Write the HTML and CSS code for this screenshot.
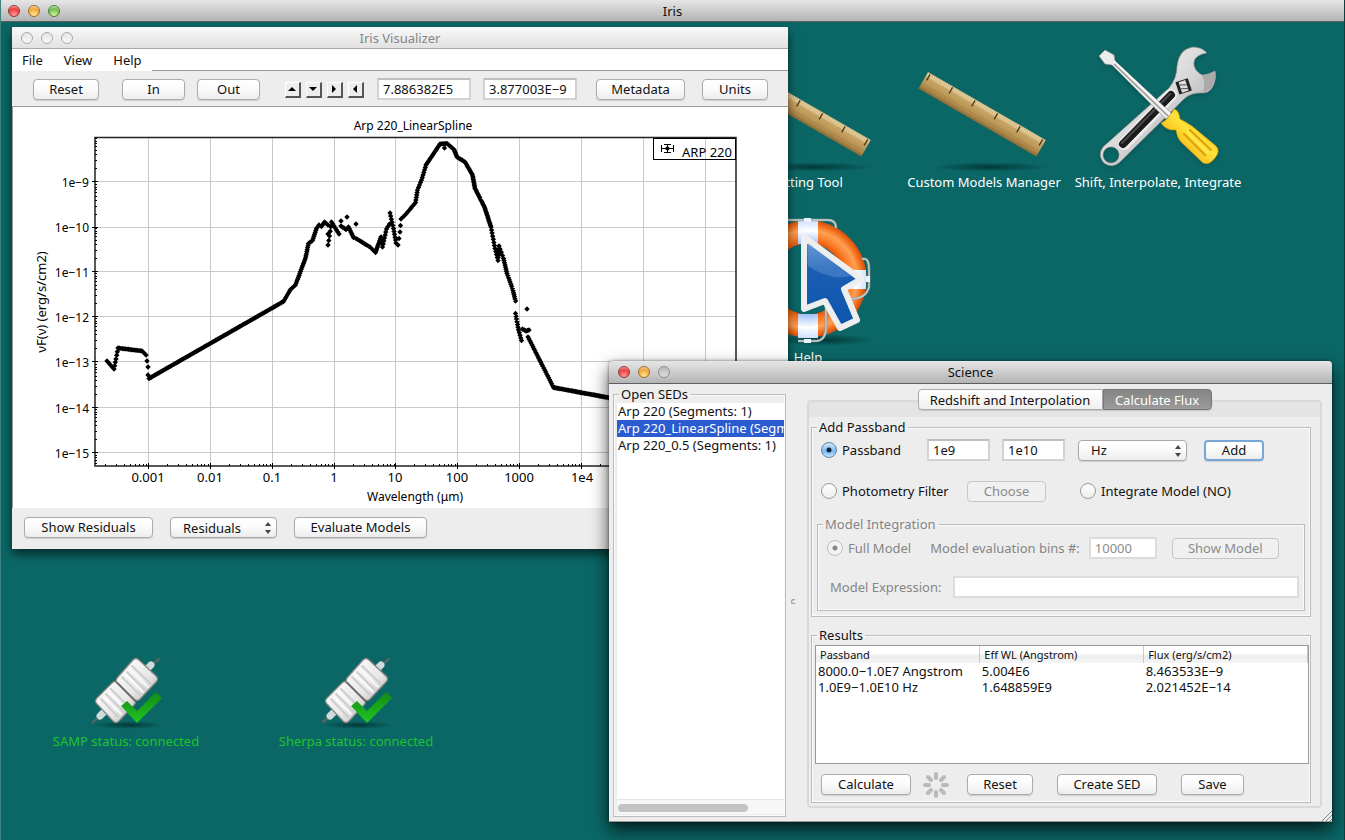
FILE: index.html
```html
<!DOCTYPE html>
<html lang="en">
<head>
<meta charset="utf-8">
<title>Iris</title>
<link rel="stylesheet" href="styles.css">
</head>
<body>
<svg class="defs" width="0" height="0" aria-hidden="true">
  <defs>
    <linearGradient id="wood" x1="0" y1="0" x2="0" y2="1"><stop offset="0" stop-color="#d9bf88"/><stop offset=".35" stop-color="#c5a263"/><stop offset=".7" stop-color="#b89352"/><stop offset="1" stop-color="#8d6b35"/></linearGradient>
    <linearGradient id="steel" x1="0" y1="0" x2="1" y2="1"><stop offset="0" stop-color="#fff"/><stop offset=".5" stop-color="#d8d8d8"/><stop offset="1" stop-color="#8e8e8e"/></linearGradient>
    <linearGradient id="yellow" x1="0" y1="1" x2="1" y2="0"><stop offset="0" stop-color="#c88400"/><stop offset=".3" stop-color="#f7b917"/><stop offset=".55" stop-color="#ffe23a"/><stop offset=".8" stop-color="#f5bd14"/><stop offset="1" stop-color="#e09a05"/></linearGradient>
    <radialGradient id="buoy" gradientUnits="userSpaceOnUse" cx="68" cy="68" r="59"><stop offset=".6" stop-color="#e0560b"/><stop offset=".7" stop-color="#fb7a25"/><stop offset=".83" stop-color="#ffa052"/><stop offset=".93" stop-color="#f06a1a"/><stop offset="1" stop-color="#d04c08"/></radialGradient>
    <radialGradient id="band" gradientUnits="userSpaceOnUse" cx="68" cy="68" r="59"><stop offset=".6" stop-color="#9fc0f5"/><stop offset=".82" stop-color="#fff"/><stop offset="1" stop-color="#cfe0fc"/></radialGradient>
    <linearGradient id="pointer" x1="0" y1="0" x2="0" y2="1"><stop offset="0" stop-color="#5d93d4"/><stop offset=".35" stop-color="#1a5fb4"/><stop offset="1" stop-color="#0c54ab"/></linearGradient>
    <linearGradient id="plug" x1="0" y1="0" x2="1" y2="1"><stop offset="0" stop-color="#fff"/><stop offset=".6" stop-color="#e8e8e8"/><stop offset="1" stop-color="#b4b4b4"/></linearGradient>
    <linearGradient id="tick" x1="0" y1="0" x2="0" y2="1"><stop offset="0" stop-color="#128a14"/><stop offset="1" stop-color="#22c522"/></linearGradient>
    <radialGradient id="shade"><stop offset="0" stop-color="#022f2f" stop-opacity=".85"/><stop offset="1" stop-color="#033" stop-opacity="0"/></radialGradient>
    <symbol id="ruler" viewBox="0 -22 136 128">
      <ellipse cx="74" cy="101" rx="60" ry="5" fill="url(#shade)"/>
      <g transform="translate(12 6) rotate(30)">
        <rect width="136" height="19" fill="url(#wood)"/>
        <path d="M1 3h134" stroke="#e6d4a8" stroke-width="4" stroke-dasharray="1 1"/>
        <path d="M3 1v7M29 1v7M55 1v7M81 1v7M107 1v7M133 1v7" stroke="#4a381b" stroke-width="1.3"/>
        <path d="M0 13h136" stroke="#a27d42" stroke-width=".6"/>
      </g>
    </symbol>
    <symbol id="plug-ok" viewBox="0 0 76 80">
      <ellipse cx="40" cy="74" rx="36" ry="4" fill="url(#shade)"/>
      <path d="M5 71l9-7M62 15l9-7" stroke="#566" stroke-width="2.5" stroke-linecap="round"/>
      <path d="M12 65l4-4M59 18l4-4" stroke="#cfdada" stroke-width="7" stroke-linecap="round"/>
      <g stroke="#8a8482" stroke-width="1.2" stroke-linejoin="round" fill="url(#plug)">
        <path d="M45 9q3-3 6 0l17 16q3 3 0 6L52 48q-3 3-6 0L29 33q-2-3 0-6z"/>
        <path d="M24 32q3-3 6 0l16 16q3 3 0 6L31 70q-3 3-6 0L9 53q-3-3 0-6z"/>
      </g>
      <g stroke="#cdcdcd" stroke-width="2" stroke-linecap="round"><path d="M44 15l19 18M39 21l18 18M34 26l18 18M23 38l18 18M18 43l18 18M13 48l17 18"/></g>
      <g stroke="#fff" stroke-width="1.5" stroke-linecap="round"><path d="M42 18l18 18M37 23l18 18M21 41l18 18M16 46l17 17"/></g>
      <path d="M28 31l20 20" stroke="#67615f" stroke-width="1.5"/>
      <path d="M33 55l6-5 10 10 19-19 6 6-25 25z" fill="url(#tick)"/>
    </symbol>
  </defs>
</svg>

<div class="screen">
  <header class="titlebar main-title">
    <span class="lights"><i class="light red"></i><i class="light amber"></i><i class="light green"></i></span>
    <h1>Iris</h1>
  </header>

  <main class="desktop">
    <a class="shortcut fitting" href="#fitting">
      <svg width="136" height="128"><use href="#ruler"/></svg>
      <span>Fitting Tool</span>
    </a>
    <a class="shortcut models" href="#models">
      <svg width="136" height="128"><use href="#ruler"/></svg>
      <span>Custom Models Manager</span>
    </a>
    <a class="shortcut shift" href="#shift">
      <svg width="128" height="128" viewBox="0 0 128 128" class="cast">
        <path fill-rule="evenodd" d="M75 44Q83 34 83 22Q85 5 99 3Q108 3 113 9Q101 11 100 18Q99 26 108 31Q114 31 121 27Q123 35 118 44Q115 49 109 49Q97 48 90 55L26 118Q18 125 10 119Q3 111 9 103zM17 103a8 8 0 1 0 .1 0z" fill="url(#steel)" stroke="#8b8b8b" stroke-width=".7"/>
        <path d="M108 31Q114 31 121 27Q123 35 118 44L109 49Q112 40 108 31z" fill="#aaa"/>
        <path d="M77 51L30 100" stroke="#eee" stroke-width="12" stroke-linecap="round"/>
        <path d="M77 51L29 100" stroke="#1b1b1b" stroke-width="8" stroke-linecap="round"/>
        <path d="M76 50L28 99" stroke="#4a4a4a" stroke-width="2" stroke-linecap="round"/>
        <g transform="rotate(-18 89 42)"><rect x="83" y="36" width="13" height="13" fill="#222"/><rect x="86" y="37" width="7" height="11" fill="#ddd"/><path d="M86 40l7 2M86 44l7 2" stroke="#555"/></g>
        <path d="M5 12L11 6L20 11L21 17L78 70L72 75L18 21L11 20z" fill="#ececec" stroke="#999" stroke-width=".7"/>
        <path d="M20 20L74 72" stroke="#999" stroke-width="1.5"/><path d="M20 17L75 69" stroke="#fff" stroke-width="1.3"/>
        <path d="M80 65Q85 66 86 75Q92 78 98 82L122 102Q127 107 121 114Q115 122 109 119L87 98Q83 94 82 86Q72 87 67 79Q74 76 80 65z" fill="url(#yellow)" stroke="#c98d05" stroke-width=".6"/>
        <path d="M90 90L111 111M96 86L117 106" stroke="#dc9f0c" stroke-width="2" stroke-linecap="round"/><path d="M93 88L114 109" stroke="#ffe94e" stroke-width="2" stroke-linecap="round"/>
      </svg>
      <span>Shift, Interpolate, Integrate</span>
    </a>
    <a class="shortcut help" href="#help">
      <svg width="136" height="136" viewBox="0 0 136 136">
        <ellipse cx="84" cy="129" rx="52" ry="6" fill="url(#shade)"/>
        <circle cx="68" cy="68" r="47" fill="none" stroke="url(#buoy)" stroke-width="23"/>
        <path d="M58 9H78V33H58zM58 103H78V127H58zM103 59H126V78H103z" fill="url(#band)"/>
        <path d="M38 16Q38 9 48 9H88Q96 9 96 17M122 48Q129 46 129 58V76Q126 88 110 88M86 90V118Q85 130 76 130H58" fill="none" stroke="#8e9898" stroke-width="2.6"/>
        <path d="M38 16Q38 9 48 9H88Q96 9 96 17M122 48Q129 46 129 58V76Q126 88 110 88M86 90V118Q85 130 76 130H58" fill="none" stroke="#c5caca" stroke-width="1.4"/>
        <path d="M64 7h7v4h-7zM64 128h7v4h-7zM126 65h4v6h-4z" fill="#e8f3ff"/>
        <path d="M64 26L121 68L104 78L117 109L100 117L85 90L64 98z" fill="url(#pointer)" stroke="#eee" stroke-width="6" stroke-linejoin="round"/>
        <path d="M68 32L111 65Q90 70 68 55z" fill="#8cb4e3" opacity=".3"/>
      </svg>
      <span>Help</span>
    </a>
    <a class="shortcut status samp" href="#samp">
      <svg width="76" height="80"><use href="#plug-ok"/></svg>
      <span>SAMP status: connected</span>
    </a>
    <a class="shortcut status sherpa" href="#sherpa">
      <svg width="76" height="80"><use href="#plug-ok"/></svg>
      <span>Sherpa status: connected</span>
    </a>

    <section class="window visualizer" aria-label="Iris Visualizer">
      <header class="titlebar inactive">
        <span class="lights"><i class="light"></i><i class="light"></i><i class="light"></i></span>
        <h2>Iris Visualizer</h2>
      </header>
      <nav class="menubar">
        <a href="#file">File</a><a href="#view">View</a><a href="#menu-help">Help</a><span class="rule"></span>
      </nav>
      <div class="toolbar">
        <button class="btn w66">Reset</button>
        <div class="pair zooms"><button class="btn w63">In</button><button class="btn w63">Out</button></div>
        <div class="arrows">
          <button aria-label="Up"><svg width="14" height="14" viewBox="0 0 14 14"><path d="M3 9h8L7 5z"/></svg></button>
          <button aria-label="Down"><svg width="14" height="14" viewBox="0 0 14 14"><path d="M3 5h8L7 9z"/></svg></button>
          <button aria-label="Right"><svg width="14" height="14" viewBox="0 0 14 14"><path d="M5 3v8l4-4z"/></svg></button>
          <button aria-label="Left"><svg width="14" height="14" viewBox="0 0 14 14"><path d="M9 3v8L5 7z"/></svg></button>
        </div>
        <div class="pair fields"><input class="field w94" aria-label="X position" value="7.886382E5"><input class="field w94" aria-label="Y position" value="3.877003E−9"></div>
        <div class="pair tail"><button class="btn w89">Metadata</button><button class="btn w66">Units</button></div>
      </div>
      <svg class="plot" viewBox="12 107 776 401" role="img" aria-label="Arp 220_LinearSpline">
        <path d="M12.5 107V508" stroke="#999"/>
        <g id="grid" stroke="#c9c9c9"></g>
        <path d="M95 466V137.500H736V466z" fill="none" stroke="#222" stroke-width="1.500"/>
        <path id="ticks" stroke="#000"/>
        <path id="points"/>
        <rect x="653.5" y="138.500" width="82" height="21" fill="none" stroke="#000"/>
        <path d="M661.500 145v7M673.500 145v7M662 148.500h11M664 144.500h7M664 152.500h7M667.500 144v9" stroke="#000"/><path d="M667.500 146l3 2.500-3 2.500-3-2.500z"/>
        <text x="682" y="157" class="tick">ARP 220</text>
        <text x="413" y="130" class="mid">Arp 220_LinearSpline</text>
        <g class="end">
          <text x="89" y="187">1e−9</text><text x="89" y="232">1e−10</text><text x="89" y="277">1e−11</text><text x="89" y="322">1e−12</text><text x="89" y="367">1e−13</text><text x="89" y="413">1e−14</text><text x="89" y="458">1e−15</text>
        </g>
        <g class="mid tick">
          <text x="148" y="482">0.001</text><text x="210" y="482">0.01</text><text x="272" y="482">0.1</text><text x="334" y="482">1</text><text x="395" y="482">10</text><text x="457" y="482">100</text><text x="519" y="482">1000</text><text x="582" y="482">1e4</text>
        </g>
        <text x="415" y="501" class="mid">Wavelength (μm)</text>
        <text class="mid tick" transform="translate(46 302) rotate(-90)">νF(ν) (erg/s/cm2)</text>
      </svg>
      <footer class="bottombar">
        <button class="btn w129">Show Residuals</button>
        <span class="drop w107"><select aria-label="Residual kind"><option>Residuals</option></select><svg width="6" height="12" viewBox="0 0 6 12"><path d="M0 4h6L3 0zM0 8h6L3 12z"/></svg></span>
        <button class="btn w133">Evaluate Models</button>
      </footer>
    </section>

    <section class="window science" aria-label="Science">
      <header class="titlebar">
        <span class="lights"><i class="light red"></i><i class="light amber"></i><i class="light grey"></i></span>
        <h2>Science</h2>
      </header>
      <div class="split">
        <fieldset class="group seds">
          <legend>Open SEDs</legend>
          <ul class="list">
            <li>Arp 220 (Segments: 1)</li>
            <li class="selected">Arp 220_LinearSpline (Segments: 1)</li>
            <li>Arp 220_0.5 (Segments: 1)</li>
          </ul>
          <div class="scroll"><span></span></div>
        </fieldset>
        <div class="divider"><i></i></div>
        <div class="tabbed">
          <div class="tabs" role="tablist">
            <button role="tab" class="tab">Redshift and Interpolation</button><button role="tab" class="tab current" aria-selected="true">Calculate Flux</button>
          </div>
          <div class="pane">
            <form onsubmit="return false">
            <fieldset class="group passband">
              <legend>Add Passband</legend>
              <div class="row">
                <label class="choice w98"><input type="radio" name="source" checked>Passband</label>
                <input class="field w63" aria-label="From" value="1e9">
                <input class="field w63" aria-label="To" value="1e10">
                <span class="drop w109"><select aria-label="Units"><option>Hz</option></select><svg width="6" height="12" viewBox="0 0 6 12"><path d="M0 4h6L3 0zM0 8h6L3 12z"/></svg></span>
                <button class="btn default w60">Add</button>
              </div>
              <div class="row filter">
                <label class="choice"><input type="radio" name="source">Photometry Filter</label>
                <button class="btn w79" disabled>Choose</button>
                <label class="choice"><input type="radio" name="source">Integrate Model (NO)</label>
              </div>
              <fieldset class="group model" disabled>
                <legend>Model Integration</legend>
                <div class="row bins">
                  <label class="choice"><input type="radio" name="range" checked>Full Model</label>
                  <label for="bins">Model evaluation bins #:</label>
                  <input class="field w68" id="bins" value="10000">
                  <button class="btn w107">Show Model</button>
                </div>
                <div class="row expression">
                  <label for="expr">Model Expression:</label>
                  <input class="field grow" id="expr">
                </div>
              </fieldset>
            </fieldset>
            <fieldset class="group results">
              <legend>Results</legend>
              <div class="tablebox">
                <table>
                  <thead><tr><th>Passband</th><th>Eff WL (Angstrom)</th><th>Flux (erg/s/cm2)</th></tr></thead>
                  <tbody>
                    <tr><td>8000.0−1.0E7 Angstrom</td><td>5.004E6</td><td>8.463533E−9</td></tr>
                    <tr><td>1.0E9−1.0E10 Hz</td><td>1.648859E9</td><td>2.021452E−14</td></tr>
                  </tbody>
                </table>
              </div>
              <div class="actions">
                <button class="btn w90">Calculate</button>
                <svg class="spinner" width="28" height="28" viewBox="-14 -14 28 28"><path d="M0-7V-11M5-5L8-8M7 0H11M5 5L8 8M0 7V11M-5 5L-8 8M-7 0H-11M-5-5L-8-8"/></svg>
                <button class="btn w66">Reset</button>
                <button class="btn w100">Create SED</button>
                <button class="btn w63">Save</button>
              </div>
            </fieldset>
            </form>
          </div>
        </div>
      </div>
      <svg class="grip" width="10" height="10" viewBox="0 0 10 10"><path d="M0 10L10 0M4 10L10 4M8 10L10 8"/></svg>
    </section>
  </main>
</div>
<script src="plot.js"></script>
</body>
</html>
```
FILE: styles.css
```css
* { box-sizing: border-box; }
body { margin: 0; font: 13px/18px "Lucida Grande", "Noto Sans", "Open Sans", sans-serif; color: #111; }
button, input, select { font: inherit; color: inherit; margin: 0; }
h1, h2 { margin: 0; font-size: 13px; font-weight: 400; }
a { color: inherit; text-decoration: none; }
.defs { position: absolute; }

.screen { display: flex; flex-direction: column; min-height: 100vh; background: #0b6766; overflow: hidden; border-left: 1px solid #3d8080; border-right: 1px solid #0a3f3f; }
.desktop { flex: 1; position: relative; margin: 0 -1px; }

/* title bars */
.titlebar { display: grid; grid-template-columns: 1fr auto 1fr; align-items: center; height: 22px; padding: 0 9px; background: linear-gradient(#e6e6e6, #b4b4b4); border-bottom: 1px solid #5e5e5e; }
.main-title { margin: 0 -1px; padding: 0 8px; }
.inactive { background: linear-gradient(#f8f8f8, #e2e2e2); border-bottom-color: #a8a8a8; color: #858585; }
.lights { display: flex; gap: 8px; }
.light { width: 12px; height: 12px; border-radius: 50%; border: 1px solid #aaa; background: linear-gradient(#e4e4e4, #fafafa); }
.red { border-color: #93393a; background: radial-gradient(circle at 50% 90%, #ff9d95, #e83e3e 60%, #f8b5b2 95%); }
.amber { border-color: #9b6a2c; background: radial-gradient(circle at 50% 90%, #ffe98f, #f0a63a 60%, #fae0b0 95%); }
.green { border-color: #4c7c38; background: radial-gradient(circle at 50% 90%, #d2f6a0, #74bd53 60%, #d4efc4 95%); }
.grey { border-color: #8e8e8e; background: linear-gradient(#b9b9b9, #dedede); }

/* desktop shortcuts */
.shortcut { position: absolute; width: 180px; display: flex; flex-direction: column; align-items: center; color: #fff; line-height: 20px; }
.shortcut span { white-space: nowrap; }
.fitting { left: 719px; top: 22px; }
.models { left: 894px; top: 22px; }
.shift { left: 1068px; top: 22px; }
.help { left: 718px; top: 189px; }
.samp { left: 36px; top: 629px; }
.sherpa { left: 266px; top: 629px; }
.status { color: #1fc32a; }
.cast { filter: drop-shadow(0 2px 2px #0447); }

/* windows */
.window { position: absolute; background: #ededed; }
.window > .titlebar { border-radius: 4px 4px 0 0; }
.visualizer { left: 12px; top: 5px; width: 776px; box-shadow: 0 5px 10px #0009; }
.science { left: 609px; top: 339px; width: 723px; box-shadow: 0 8px 18px #000b, 0 0 3px #0008; border-bottom: 1px solid #999; border-radius: 4px 4px 0 0; }
.science > .titlebar { height: 23px; }

/* controls */
.btn { height: 21px; padding: 0; line-height: 19px; text-align: center; border: 1px solid #ababab; border-radius: 4px; background: linear-gradient(#fff, #fbfbfb 45%, #ececec); box-shadow: 0 1px 1px #0002; white-space: nowrap; flex: none; }
.btn:disabled { color: #8c8c8c; border-color: #c6c6c6; background: #f0f0f0; box-shadow: none; }
.default { border: 2px solid #78a7d8; line-height: 17px; }
.field { height: 22px; padding: 0 4px; border: 2px solid #d2d2d2; border-top-color: #bfbfbf; background: #fff; border-radius: 0; flex: none; }
.field:disabled { color: #8c8c8c; border-color: #dcdcdc; background: #fff; }
.drop { position: relative; display: flex; flex: none; }
.drop select { appearance: none; width: 100%; height: 21px; padding: 0 12px; border: 1px solid #a8a8a8; border-radius: 4px; background: linear-gradient(#fff, #fbfbfb 45%, #ececec); box-shadow: 0 1px 1px #0002; }
.drop svg { position: absolute; right: 6px; top: 5px; fill: #444; pointer-events: none; }
.choice { display: flex; align-items: center; gap: 5px; white-space: nowrap; }
.choice input { appearance: none; width: 16px; height: 16px; border: 1px solid #999; border-radius: 50%; background: linear-gradient(#fff, #eee); }
.choice input:checked { border-color: #6084ad; background: radial-gradient(circle, #0b2240 0 2px, transparent 3px), linear-gradient(#d5e8fa, #79b7f0 60%, #c1e6ff); }
.choice input:disabled { border-color: #bdbdbd; background: radial-gradient(circle, #888 0 2px, transparent 3px), #f3f3f3; }
.w60 { width: 60px; } .w63 { width: 63px; } .w66 { width: 66px; } .w68 { width: 68px; }
.w79 { width: 79px; } .w89 { width: 89px; } .w90 { width: 90px; } .w94 { width: 94px; } .w98 { width: 98px; } .w100 { width: 100px; }
.w107 { width: 107px; } .w109 { width: 109px; } .w129 { width: 129px; } .w133 { width: 133px; }
.grow { flex: 1; min-width: 0; }

/* visualizer */
.menubar { display: flex; height: 22px; line-height: 22px; padding-left: 10px; background: #fff; }
.menubar a { margin-right: 21px; }
.rule { flex: 1; border-bottom: 1px solid #999; margin-left: -11px; }
.toolbar { display: flex; align-items: center; height: 36px; padding: 2px 21px 0; border-bottom: 1px solid #9a9a9a; }
.pair { display: flex; gap: 12px; }
.fields { padding-bottom: 2px; }
.zooms { margin: 0 25px 0 23px; }
.tail { margin-left: 19px; gap: 17px; }
.arrows { display: flex; gap: 5px; margin-right: 13px; }
.arrows button { width: 16px; height: 16px; padding: 0; border: 1px solid #fff; border-right: 2px solid #555; border-bottom: 2px solid #555; background: #ededed; }
.arrows svg { display: block; margin: -1px; }
.plot { display: block; width: 100%; background: #fff; font-size: 12px; }
.plot .tick { font-size: 13px; }
.plot .mid { text-anchor: middle; }
.plot .end { text-anchor: end; }
.bottombar { display: flex; gap: 17px; height: 41px; padding: 9px 12px; }

/* science */
.split { display: flex; padding: 1px 10px 4px 4px; }
.group { min-width: 0; margin: 0; padding: 0; border: 1px solid #bcbcbc; box-shadow: inset 0 0 0 1px #fafafa; }
legend { padding: 0 2px; line-height: 18px; }
.seds { width: 173px; flex: none; display: flex; flex-direction: column; padding: 0 1px 2px 3px; }
.list { flex: 1; margin: 0; padding: 0; list-style: none; background: #fff; line-height: 17px; overflow: hidden; }
.list li { padding-left: 1px; white-space: nowrap; }
.selected { background: #2a5cd0; color: #fff; }
.scroll { height: 15px; padding: 4px 1px; background: #f7f7f7; border-top: 1px solid #e4e4e4; }
.scroll span { display: block; width: 79%; height: 8px; border-radius: 4px; background: #c3c3c3; }
.divider { width: 21px; display: flex; align-items: center; justify-content: center; flex: none; }
.divider i { width: 5px; height: 5px; border: 1px solid #999; border-radius: 50%; border-right-color: transparent; margin-right: 6px; }
.tabbed { flex: 1; min-width: 0; padding: 4px 0 9px; }
.tabs { display: flex; justify-content: center; position: relative; z-index: 1; }
.tab { height: 21px; padding: 0; line-height: 18px; width: 185px; border: 1px solid #aaa; border-radius: 4px 0 0 4px; background: linear-gradient(#fff, #f0f0f0); box-shadow: 0 1px 1px #0002; }
.current { width: 109px; border-color: #777; border-radius: 0 4px 4px 0; background: linear-gradient(#858585, #9a9a9a); color: #fff; }
.pane { margin-top: -10px; padding: 16px 9px 3px 2px; border: 2px solid #d9d9d9; border-radius: 4px; background: linear-gradient(#e4e4e4 15px, #ededed 15px); }
.row { display: flex; align-items: center; height: 22px; }
.passband { padding: 3px 5px 5px 5px; }
.passband > .row { padding-left: 4px; }
.passband > .row > * { margin-right: 12px; }
.passband .drop { margin: 0 17px 0 1px; }
.passband .w98 { margin-right: 8px; }
.passband .filter { margin: 19px 0 13px; }
.passband .filter .choice { min-width: 130px; margin-right: 16px; }
.passband .filter .btn { margin-right: 34px; }
.model { color: #858585; padding: 4px 5px 12px 9px; }
.bins label + label { margin: 0 6px 0 19px; }
.bins .field { margin-left: 3px; }
.bins .btn { margin-left: 15px; }
.expression { margin-top: 17px; padding-left: 3px; }
.expression label { margin-right: 12px; }
.passband > legend { margin-left: 0; }
.model > legend { margin-left: -4px; }
.results > legend, .seds > legend { margin-left: 2px; }
.results { margin-top: 9px; padding: 1px 1px 7px 3px; }
.tablebox { height: 119px; border: 1px solid #999; background: #fff; }
table { width: 100%; table-layout: fixed; border-collapse: collapse; }
th { height: 17px; padding: 0 4px; font-size: 11px; font-weight: 400; line-height: 17px; text-align: left; background: linear-gradient(#fff 40%, #ededed 60%, #f4f4f4); border-right: 1px solid #c8c8c8; }
td { height: 16px; padding: 0 2px; line-height: 16px; white-space: nowrap; }
.actions { display: flex; align-items: center; height: 21px; margin: 10px 0 0 6px; }
.actions .btn:nth-child(n+4) { margin-left: 24px; }
.spinner { margin: 0 17px 0 11px; fill: none; stroke: #b9b9b9; stroke-width: 4; stroke-linecap: round; }
.grip { position: absolute; right: 0; bottom: 0; stroke: #888; }
```
FILE: plot.js
```js
const gridX = [148.5, 210.5, 272.5, 334.5, 395.5, 457.5, 519.5, 581.5, 643.5, 705.5];
const gridY = [181.5, 227.5, 271.5, 316.5, 361.5, 407.5, 452.5];
const decadeX = 61.9, decadeY = 45.2;

let grid = '';
gridX.forEach(x => { grid += `<path d="M${x} 138V466"/>`; });
gridY.forEach(y => { grid += `<path d="M96 ${y}H736"/>`; });
document.getElementById('grid').innerHTML = grid;

let ticks = '';
[gridX[0] - decadeX, ...gridX].forEach(x => {
  if (x > 95) ticks += `M${x} 463v6`;
  for (let k = 2; k < 10; k++) {
    const t = Math.round(x + Math.log10(k) * decadeX) + 0.5;
    if (t > 96 && t < 736) ticks += `M${t} 464v2`;
  }
});
[...gridY, gridY[6] + decadeY].forEach(y => {
  if (y < 466) ticks += `M92 ${y}h6`;
  for (let k = 2; k < 10; k++) {
    const t = Math.round(y - Math.log10(k) * decadeY) + 0.5;
    if (t > 138 && t < 466) ticks += `M95 ${t}h2`;
  }
});
document.getElementById('ticks').setAttribute('d', ticks);

/* Each run is sampled at the given step; runs of one vertex are lone points. */
const runs = [
  [1.5, [107, 361], [114, 369]],
  [4, [114, 369], [116, 359], [118, 348]],
  [1.5, [118, 348], [142, 351], [146, 355]],
  [8, [146, 355], [148, 367], [148, 375]],
  [1.3, [149, 378.5], [283.5, 301.5]],
  [2, [283.5, 301.5], [290.5, 289.5], [295.5, 285], [305.5, 258], [308.5, 243.5], [312.5, 240.5], [316.5, 228.5], [319, 225], [321.5, 226.5], [324.5, 222], [328, 225]],
  [5, [328, 245], [329.5, 236], [331.5, 222]],
  [2.5, [331.5, 222], [339, 234]],
  [9, [328, 234]], [9, [341, 221]], [9, [347, 217]], [9, [356, 224]], [9, [444.5, 148]], [9, [527, 309]],
  [1.8, [341, 226], [346, 229.5], [348.5, 227], [353.5, 237.5], [356, 238.5], [370, 247], [375.5, 252.5], [381, 237]],
  [3, [381, 237], [382.5, 247], [386.5, 229], [389.5, 224]],
  [3, [390, 213], [393.5, 228.5], [396, 243], [398, 245]],
  [6, [398, 245], [400, 232], [401, 219]],
  [1.8, [401, 219], [406.5, 213.5], [415.5, 202.5]],
  [2.5, [415.5, 202.5], [417.5, 190], [421.5, 180], [426, 165]],
  [1.5, [426, 165], [440, 144], [447, 143.5], [454, 149.5], [457, 157], [465, 162], [472.5, 175], [475, 188.5], [484.5, 207], [491, 227]],
  [3, [491, 227], [495, 248.5], [498, 260.5], [499, 246], [503.5, 258.5]],
  [2.2, [503.5, 258.5], [507, 273.5], [512.5, 288.5], [515.5, 301]],
  [3, [515.5, 313.5], [518.5, 330], [521.5, 340.5]],
  [2, [522.5, 329], [526, 331], [529, 330]],
  [2.2, [528, 337], [553.5, 387.5]],
  [1.3, [553.5, 387.5], [643, 404]]
];

let points = '';
const mark = (x, y) => { points += `M${x.toFixed(1)} ${(y - 2.7).toFixed(1)}l2.7 2.7-2.7 2.7-2.7-2.7z`; };
runs.forEach(([step, ...pts]) => {
  mark(...pts[0]);
  for (let i = 1; i < pts.length; i++) {
    const [x0, y0] = pts[i - 1], [x1, y1] = pts[i];
    const n = Math.max(1, Math.round(Math.hypot(x1 - x0, y1 - y0) / step));
    for (let j = 1; j <= n; j++) mark(x0 + (x1 - x0) * j / n, y0 + (y1 - y0) * j / n);
  }
});
document.getElementById('points').setAttribute('d', points);
```
